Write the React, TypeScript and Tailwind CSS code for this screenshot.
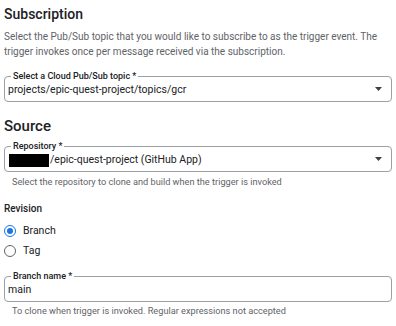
import { ReactNode } from 'react'

function Field({
  label,
  children,
  dropdown = false,
}: {
  label: string
  children: ReactNode
  dropdown?: boolean
}) {
  return (
    <div className="relative flex h-[26px] items-center rounded-[4px] border border-[#9aa0a6] pl-[3px] pr-[9px]">
      <span className="absolute -top-[6px] left-[6px] bg-white px-[2px] text-[9px] leading-[10px] font-medium text-[#202124]">
        {label}
      </span>
      <div className="flex flex-1 items-center pt-[2px] text-[10.5px] leading-[14px] text-[#202124]">{children}</div>
      {dropdown && (
        <svg width="7" height="4" viewBox="0 0 7 4" className="shrink-0">
          <path d="M0 0 L7 0 L3.5 4 Z" fill="#3c4043" />
        </svg>
      )}
    </div>
  )
}

function Radio({ label, checked }: { label: string; checked?: boolean }) {
  return (
    <div className="flex h-[20px] items-center gap-[7px]">
      <span
        className={`flex h-[12px] w-[12px] items-center justify-center rounded-full border-[1.5px] ${
          checked ? 'border-[#1a73e8]' : 'border-[#5f6368]'
        }`}
      >
        {checked && <span className="h-[6px] w-[6px] rounded-full bg-[#1a73e8]" />}
      </span>
      <span className="text-[10.5px] text-[#202124]">{label}</span>
    </div>
  )
}

export default function App() {
  return (
    <div className="h-[326px] w-[396px] overflow-hidden bg-white px-[4px] pt-[4px] font-['Roboto','Liberation_Sans',sans-serif]">
      <h2 className="text-[14px] leading-[20px] font-medium text-[#202124]">Subscription</h2>
      <p className="mt-[5px] text-[10px] leading-[15px] text-[#5f6368]">
        Select the Pub/Sub topic that you would like to subscribe to as the trigger event. The trigger
        invokes once per message received via the subscription.
      </p>

      <div className="mt-[17px]">
        <Field label="Select a Cloud Pub/Sub topic *" dropdown>
          projects/epic-quest-project/topics/gcr
        </Field>
      </div>

      <h2 className="mt-[14px] text-[15px] leading-[20px] font-medium text-[#202124]">Source</h2>

      <div className="mt-[10px]">
        <Field label="Repository *" dropdown>
          <span className="mr-[1px] ml-[1px] inline-block h-[13px] w-[40px] bg-black" />
          /epic-quest-project (GitHub App)
        </Field>
      </div>
      <p className="mt-[4px] pl-[8px] text-[9.2px] leading-[12px] text-[#5f6368]">
        Select the repository to clone and build when the trigger is invoked
      </p>

      <div className="mt-[15px] text-[10px] leading-[12px] font-medium text-[#202124]">Revision</div>
      <div className="mt-[6px] flex flex-col">
        <Radio label="Branch" checked />
        <Radio label="Tag" />
      </div>

      <div className="mt-[15px]">
        <Field label="Branch name *">main</Field>
      </div>
      <p className="mt-[3px] pl-[8px] text-[9.2px] leading-[12px] text-[#5f6368]">
        To clone when trigger is invoked. Regular expressions not accepted
      </p>
    </div>
  )
}
